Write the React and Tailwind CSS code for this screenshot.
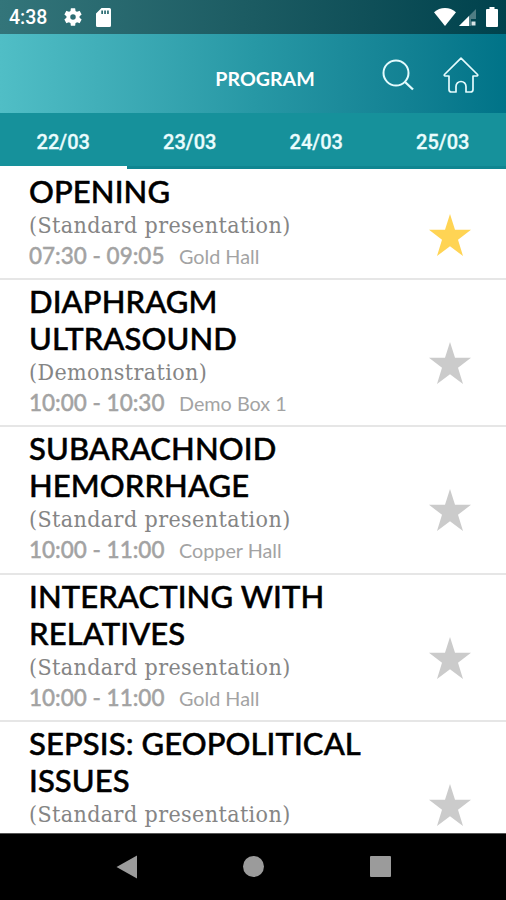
import { clsx } from "clsx";

const days = ["22/03", "23/03", "24/03", "25/03"];

const sessions = [
  { title: ["OPENING"], type: "(Standard presentation)", time: "07:30 - 09:05", place: "Gold Hall", starred: true },
  { title: ["DIAPHRAGM", "ULTRASOUND"], type: "(Demonstration)", time: "10:00 - 10:30", place: "Demo Box 1" },
  { title: ["SUBARACHNOID", "HEMORRHAGE"], type: "(Standard presentation)", time: "10:00 - 11:00", place: "Copper Hall" },
  { title: ["INTERACTING WITH", "RELATIVES"], type: "(Standard presentation)", time: "10:00 - 11:00", place: "Gold Hall" },
  { title: ["SEPSIS: GEOPOLITICAL", "ISSUES"], type: "(Standard presentation)" }
];

function StatusBar() {
  return (
    <div className="flex h-[34px] shrink-0 items-center bg-linear-to-r from-[#33757a] via-[#1b5b62] to-[#00424d] pr-[8px] pl-[9px] text-white">
      <span className="w-[39px] pt-[2px] font-[Roboto] text-[19.5px] leading-none font-medium whitespace-nowrap">4:38</span>
      <svg viewBox="0 0 24 24" className="ml-[14px] h-[22px] w-[22px]" fill="currentColor">
        <path d="M19.14 12.94c.04-.3.06-.61.06-.94 0-.32-.02-.64-.07-.94l2.03-1.58a.49.49 0 0 0 .12-.61l-1.92-3.32a.49.49 0 0 0-.59-.22l-2.39.96c-.5-.38-1.03-.7-1.62-.94l-.36-2.54a.48.48 0 0 0-.48-.41h-3.84a.47.47 0 0 0-.47.41l-.36 2.54c-.59.24-1.13.57-1.62.94l-2.39-.96a.48.48 0 0 0-.59.22L2.74 8.87a.47.47 0 0 0 .12.61l2.03 1.58c-.05.3-.09.63-.09.94s.02.64.07.94l-2.03 1.58a.49.49 0 0 0-.12.61l1.92 3.32c.12.22.37.29.59.22l2.39-.96c.5.38 1.03.7 1.62.94l.36 2.54c.05.24.24.41.48.41h3.84c.24 0 .44-.17.47-.41l.36-2.54c.59-.24 1.13-.56 1.62-.94l2.39.96c.22.08.47 0 .59-.22l1.92-3.32a.47.47 0 0 0-.12-.61zM12 15a3 3 0 1 1 0-6 3 3 0 0 1 0 6z" />
      </svg>
      <svg viewBox="0 0 15 19" className="ml-[12px] h-[19px] w-[15px]" fill="currentColor">
        <path fillRule="evenodd" d="M5.5 0H13.500a1.500 1.500 0 0 1 1.500 1.500v16a1.500 1.500 0 0 1-1.500 1.500h-12A1.500 1.500 0 0 1 0 17.500V5.600zM5.300 2.500v3.500h1.700V2.500zM8.200 2.500v3.500h1.700V2.500zM11.100 2.500v3.500h1.700V2.500z" />
      </svg>
      <svg viewBox="0 0 22 18" className="ml-auto h-[18px] w-[22px]" fill="currentColor">
        <path d="M11 18 0 4.200C3 1.500 7 0 11 0s8 1.500 11 4.200z" />
      </svg>
      <svg viewBox="0 0 17 17" className="mt-[1px] ml-[3px] h-[17px] w-[17px]" fill="currentColor">
        <path d="M17 0v10h-5v7H0z" opacity=".3" />
        <path d="M10 7v10H0z" />
        <path d="M12.500 12.500h4v4h-4z" opacity=".85" />
      </svg>
      <svg viewBox="0 0 12 20" className="ml-[10px] h-[20px] w-[12px]" fill="currentColor">
        <path d="M3.500 0h5v2H11a1 1 0 0 1 1 1v16a1 1 0 0 1-1 1H1a1 1 0 0 1-1-1V3a1 1 0 0 1 1-1h2.500z" />
      </svg>
    </div>
  );
}

function Header() {
  return (
    <header className="grid h-[79px] shrink-0 grid-cols-[1fr_auto_1fr] items-center bg-linear-to-r from-[#50bec6] via-[#2798a5] to-[#007388] text-white">
      <h1 className="col-start-2 mt-[10px] ml-[24px] font-[Lato] text-[19.6px] leading-none font-bold">PROGRAM</h1>
      <div className="flex items-start justify-end pt-[3px] pr-[27px]">
        <svg viewBox="0 0 32 32" className="mt-[1px] mr-[29px] h-[32px] w-[32px]" fill="none" stroke="#e4fbfd" strokeWidth="2">
          <circle cx="14" cy="14" r="12.500" />
          <path d="M22.500 22.500 31 30.500" strokeWidth="2.400" />
        </svg>
        <svg viewBox="0 0 36 36" className="-mt-[1px] h-[36px] w-[36px]" fill="none" stroke="#e4fbfd" strokeWidth="1.700" strokeLinejoin="round">
          <path d="M18 1.200 1.500 17.500c-.6.700-.2 1.500.6 1.500H6v13.500a2.500 2.500 0 0 0 2.500 2.500H13v-5.500a5 5 0 0 1 10 0V35h4.500a2.500 2.500 0 0 0 2.500-2.500V19h3.900c.8 0 1.200-.8.600-1.500z" />
        </svg>
      </div>
    </header>
  );
}

function DayTabs() {
  return (
    <nav className="grid h-[56px] shrink-0 grid-cols-4 bg-[#16919b] font-[Roboto] text-[20px] font-medium text-[#eafcfd]">
      {days.map((day, i) => (
        <button
          key={day}
          className={clsx(
            "border-b-[3px] pt-[5px] leading-none [-webkit-text-stroke:0.3px]",
            i === 0 ? "border-white" : "border-[#108691]"
          )}
        >
          {day}
        </button>
      ))}
    </nav>
  );
}

function Star({ active }) {
  return (
    <svg viewBox="0 0 42 42" className={clsx("h-[42px] w-[42px] shrink-0", active ? "text-[#ffd454]" : "text-[#cbcbcb]")} fill="currentColor">
      <path d="M21 0l5 15.800h16L29 25.800 34 42 21 32.200 8 42l5-16.200L0 15.800h16z" />
    </svg>
  );
}

function Session({ session }) {
  return (
    <li className="flex items-center border-b-2 border-[#e6e6e6] pt-[3px] pr-[35px] pb-[8.200px] pl-[29px]">
      <div className="min-w-0 flex-1">
        <h2 className="font-[Lato] text-[31px] leading-[37px] font-medium tracking-[0.1px] whitespace-nowrap text-black [-webkit-text-stroke:0.5px]">
          {session.title.map((line) => (
            <span key={line} className="block">{line}</span>
          ))}
        </h2>
        <p className="h-[31px] font-['DejaVu_Serif_Condensed','DejaVu_Serif'] text-[23px] leading-[31px] font-stretch-condensed tracking-[0.4px] whitespace-nowrap text-[#858585]">{session.type}</p>
        <p className="flex h-[29px] items-baseline font-[Lato] leading-[29px] whitespace-nowrap text-[#a3a3a3]">
          <span className="w-[150px] text-[22.5px] font-medium [-webkit-text-stroke:0.4px]">{session.time}</span>
          <span className="text-[19.8px]">{session.place}</span>
        </p>
      </div>
      <div className="pt-[26px]">
        <Star active={session.starred} />
      </div>
    </li>
  );
}

function NavBar() {
  return (
    <div className="grid h-[67px] shrink-0 grid-cols-[127px_127px_126px] items-center justify-center border-t border-[#555] bg-black pb-[1px] text-[#9b9b9b]">
      <svg viewBox="0 0 22 24" className="h-[24px] w-[22px] justify-self-center" fill="currentColor">
        <path d="M21 .5v23L.500 12z" />
      </svg>
      <div className="h-[21px] w-[21px] justify-self-center rounded-full bg-[#9b9b9b]" />
      <div className="h-[21px] w-[21px] justify-self-center rounded-[1px] bg-[#9b9b9b]" />
    </div>
  );
}

export default function App() {
  return (
    <div className="flex h-screen flex-col overflow-hidden bg-white">
      <StatusBar />
      <Header />
      <DayTabs />
      <ul className="min-h-0 flex-1 overflow-hidden pt-[1px]">
        {sessions.map((session) => (
          <Session key={session.title[0]} session={session} />
        ))}
      </ul>
      <NavBar />
    </div>
  );
}
